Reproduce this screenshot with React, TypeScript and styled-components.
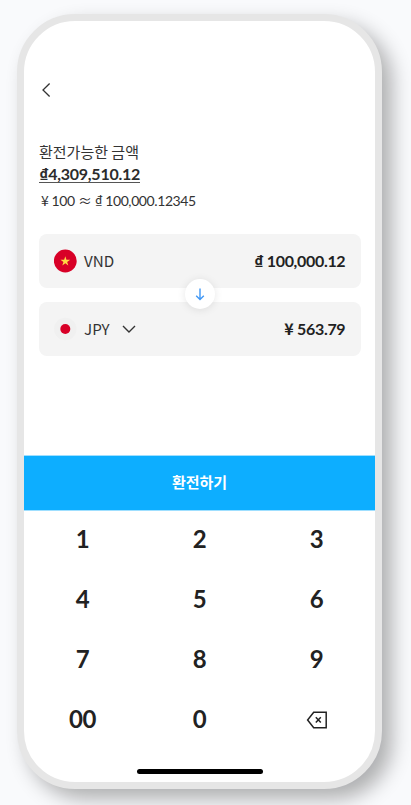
import React from 'react';
import styled, { createGlobalStyle } from 'styled-components';

const GlobalStyle = createGlobalStyle`
  * { box-sizing: border-box; }
  html, body { margin: 0; height: 805px; overflow: hidden; background: #f9fafc; }
  body { font-family: Lato, "Noto Sans CJK KR", sans-serif; color: #222; }
  button { font: inherit; color: inherit; border: 0; padding: 0; background: none; }
`;

const Stage = styled.main`
  width: 411px;
  height: 805px;
  padding: 14px 0 0 17px;
  overflow: hidden;
  background: #f9fafc;
`;

const Phone = styled.div`
  width: 365px;
  height: 775px;
  border: 7px solid #e6e6e6;
  border-radius: 58px;
  background: #fff;
  box-shadow: 10px 10px 20px rgba(0, 0, 0, 0.3);
  display: flex;
  flex-direction: column;
  align-items: stretch;
`;

const Header = styled.header`
  height: 119px;
  padding: 61px 0 0 17px;
  svg { display: block; }
`;

const Summary = styled.section`
  height: 94px;
  padding-left: 15px;
  display: flex;
  flex-direction: column;
  align-items: flex-start;
`;

const Caption = styled.div`
  height: 24px;
  font: 15px/23px "Noto Sans CJK KR", sans-serif;
  color: #333;
`;

const Symbol = styled.span`
  font-family: "Noto Sans CJK KR", sans-serif;
  line-height: 1;
`;

const Balance = styled.div`
  height: 19px;
  font-size: 16px;
  line-height: 19px;
  font-weight: 700;
  letter-spacing: -0.015em;
  color: #2c2c2c;
  border-bottom: 1px solid #555;
`;

const Rate = styled.div`
  margin: 8px 0 0 2px;
  font-size: 14px;
  line-height: 20px;
  letter-spacing: -0.029em;
  white-space: pre;
  color: #333;
`;

const Exchange = styled.section`
  position: relative;
  display: flex;
  flex-direction: column;
  gap: 14px;
  margin: 0 14px 0 15px;
`;

const Card = styled.div`
  height: 54px;
  display: flex;
  align-items: center;
  padding: 0 15px;
  border-radius: 8px;
  background: #f4f4f4;
`;

const Code = styled.span`
  margin: -2px 12px 0 7px;
  font: 15.2px/24px "Noto Sans CJK KR", sans-serif;
  color: #333;
`;

const Amount = styled.span`
  margin-left: auto;
  margin-right: 0.7px;
  font-size: 16px;
  line-height: 24px;
  font-weight: 700;
  letter-spacing: -0.02em;
`;

const Swap = styled.button`
  position: absolute;
  top: 45px;
  left: 146px;
  width: 30px;
  height: 30px;
  display: grid;
  place-items: center;
  border-radius: 50%;
  background: #fff;
  box-shadow: 0 1px 8px rgba(0, 0, 0, 0.1);
`;

const Submit = styled.button`
  height: 56px;
  margin-top: 99px;
  padding-bottom: 3px;
  background: #0daeff;
  border: solid #9fdfff;
  border-width: 1px 0;
  font: 700 15px/50px "Noto Sans CJK KR", sans-serif;
  color: #fff;
`;

const Keypad = styled.div`
  display: grid;
  grid-template-columns: repeat(3, 117px);
  grid-auto-rows: 60px;
  margin-top: -2px;
`;

const Key = styled.button`
  display: grid;
  place-items: center;
  font-size: 24px;
  line-height: 30px;
  font-weight: 700;
  letter-spacing: -0.02em;
  svg { margin-top: 2px; }
`;

const HomeIndicator = styled.div`
  width: 126px;
  height: 5px;
  margin: 20px auto 0;
  border-radius: 3px;
  background: #000;
`;

const Vietnam = () => (
  <svg width="23" height="24" viewBox="0 0 23 24">
    <circle cx="11.3" cy="12" r="11.4" fill="#d80027" />
    <path d="M11.3 7.3l1.15 3.5h3.7l-3 2.15 1.15 3.5-3-2.15-3 2.15 1.15-3.5-3-2.15h3.7z" fill="#ffda44" />
  </svg>
);

const Japan = () => (
  <svg width="23" height="24" viewBox="0 0 23 24">
    <circle cx="11.3" cy="12" r="11.2" fill="#f0f0f0" />
    <circle cx="11.3" cy="12" r="5" fill="#d80027" />
  </svg>
);

const keys = ['1', '2', '3', '4', '5', '6', '7', '8', '9', '00', '0'];

export default function App() {
  return (
    <>
      <GlobalStyle />
      <Stage>
        <Phone>
          <Header>
            <svg width="12" height="16" viewBox="0 0 12 16" fill="none" stroke="#333" strokeWidth="1.3">
              <path d="M8.6 1.5L2 8l6.6 6.5" />
            </svg>
          </Header>
          <Summary>
            <Caption>환전가능한 금액</Caption>
            <Balance><Symbol>₫</Symbol>4,309,510.12</Balance>
            <Rate><Symbol>¥</Symbol> 100 <Symbol>≈</Symbol> <Symbol>₫</Symbol> 100,000.12345</Rate>
          </Summary>
          <Exchange>
            <Card>
              <Vietnam />
              <Code>VND</Code>
              <Amount><Symbol>₫</Symbol> 100,000.12</Amount>
            </Card>
            <Card>
              <Japan />
              <Code>JPY</Code>
              <svg width="14" height="9" viewBox="0 0 14 9" fill="none" stroke="#333" strokeWidth="1.4">
                <path d="M1 1l6 6 6-6" />
              </svg>
              <Amount><Symbol>¥</Symbol> 563.79</Amount>
            </Card>
            <Swap aria-label="swap">
              <svg width="10" height="13" viewBox="0 0 10 13" fill="none" stroke="#4198f5" strokeWidth="1.4">
                <path d="M5 .5v11M1.2 7.8L5 11.6l3.8-3.8" />
              </svg>
            </Swap>
          </Exchange>
          <Submit>환전하기</Submit>
          <Keypad>
            {keys.map((k) => <Key key={k}>{k}</Key>)}
            <Key aria-label="delete">
              <svg width="22" height="18" viewBox="0 0 22 18" fill="none" stroke="#222" strokeWidth="1.5">
                <path d="M7.7 1.2H20.2v15.6H7.7L1.6 9zM9.8 6.3l5 5.2M14.8 6.3l-5 5.2" />
              </svg>
            </Key>
          </Keypad>
          <HomeIndicator />
        </Phone>
      </Stage>
    </>
  );
}
